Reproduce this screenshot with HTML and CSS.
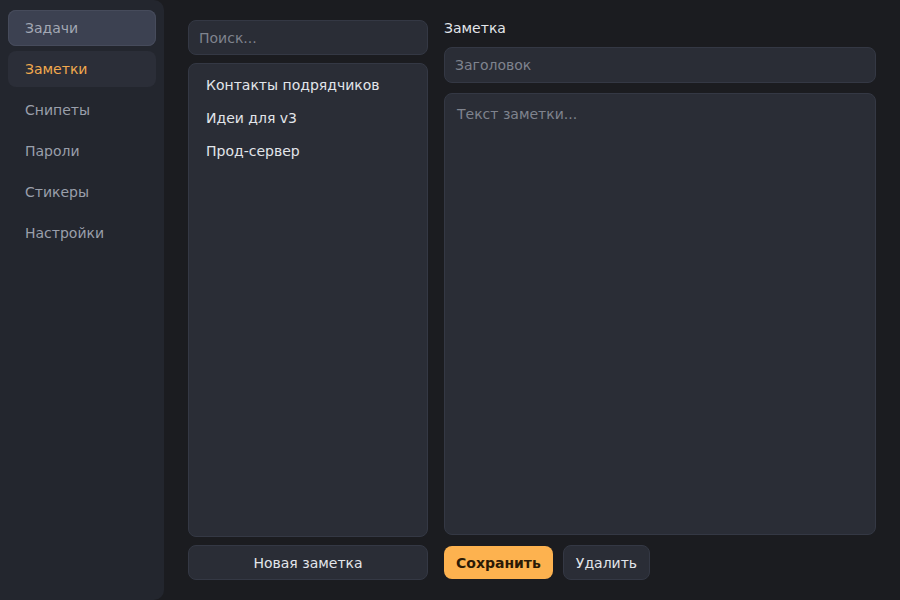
FILE: index.html
```html
<!DOCTYPE html>
<html lang="ru">
<head>
  <meta charset="UTF-8">
  <meta name="viewport" content="width=device-width, initial-scale=1">
  <title>Заметки</title>
  <link rel="stylesheet" href="styles.css">
</head>
<body>

<div class="app">
  <nav class="sidebar">
    <a class="nav-item active">Задачи</a>
    <a class="nav-item current">Заметки</a>
    <a class="nav-item">Снипеты</a>
    <a class="nav-item">Пароли</a>
    <a class="nav-item">Стикеры</a>
    <a class="nav-item">Настройки</a>
  </nav>

  <main class="main">
    <div class="list-col">
      <input type="text" class="field search" placeholder="Поиск...">
      <div class="note-list">
        <div class="note-row">Контакты подрядчиков</div>
        <div class="note-row">Идеи для v3</div>
        <div class="note-row">Прод-сервер</div>
      </div>
      <button class="btn btn-wide">Новая заметка</button>
    </div>

    <div class="edit-col">
      <div class="edit-title">Заметка</div>
      <input type="text" class="field" placeholder="Заголовок">
      <textarea class="field body-text" placeholder="Текст заметки..."></textarea>
      <div class="actions">
        <button class="btn btn-save">Сохранить</button>
        <button class="btn">Удалить</button>
      </div>
    </div>
  </main>
</div>

</body>
</html>
```

FILE: styles.css
```css
body {
  margin: 0;
  background: #1b1c20;
  font-family: "DejaVu Sans", sans-serif;
  font-size: 14px;
  color: #d8dbe2;
}
.app {
  display: flex;
  height: 600px;
}
.sidebar {
  width: 164px;
  flex-shrink: 0;
  box-sizing: border-box;
  background: #23262e;
  border-radius: 0 10px 10px 0;
  padding: 10px 8px;
  display: flex;
  flex-direction: column;
  gap: 5px;
}
.nav-item {
  display: block;
  height: 36px;
  line-height: 36px;
  padding: 0 17px;
  border-radius: 8px;
  color: #9a9fab;
  box-sizing: border-box;
}
.nav-item.active {
  background: #3c4151;
  box-shadow: inset 0 0 0 1px #464b5b;
  color: #a3a8b4;
}
.nav-item.current {
  background: #2b2e38;
  color: #f1a94e;
}
.main {
  flex: 1;
  display: flex;
  gap: 16px;
  padding: 20px 24px;
}
.list-col {
  width: 240px;
  display: flex;
  flex-direction: column;
  gap: 8px;
}
.edit-col {
  flex: 1;
  display: flex;
  flex-direction: column;
  gap: 10px;
}
.field {
  box-sizing: border-box;
  width: 100%;
  height: 36px;
  padding: 0 10px;
  background: #2a2d36;
  border: 1px solid #343844;
  border-radius: 8px;
  color: #d8dbe2;
  font-family: inherit;
  font-size: 14px;
  outline: none;
}
.field::placeholder {
  color: #7f838e;
}
.search {
  height: 35px;
}
.note-list {
  flex: 1;
  background: #2a2d36;
  border: 1px solid #343844;
  border-radius: 8px;
  padding: 5px 0;
}
.note-row {
  height: 33px;
  line-height: 33px;
  padding: 0 17px;
  color: #e2e5ea;
}
.edit-title {
  height: 17px;
  line-height: 17px;
  color: #e2e5ea;
}
.body-text {
  flex: 1;
  height: auto;
  padding: 12px 12px;
  resize: none;
  line-height: 17px;
}
.actions {
  display: flex;
  align-items: center;
  gap: 10px;
}
.btn {
  height: 35px;
  padding: 0 12px;
  background: #2a2d36;
  border: 1px solid #343844;
  border-radius: 8px;
  color: #e2e5ea;
  font-family: inherit;
  font-size: 14px;
  cursor: pointer;
}
.btn-wide {
  width: 100%;
}
.btn-save {
  height: 33px;
  padding: 0 12px;
  background: #fdb24f;
  border: none;
  color: #2b1a06;
  font-weight: bold;
}
```
